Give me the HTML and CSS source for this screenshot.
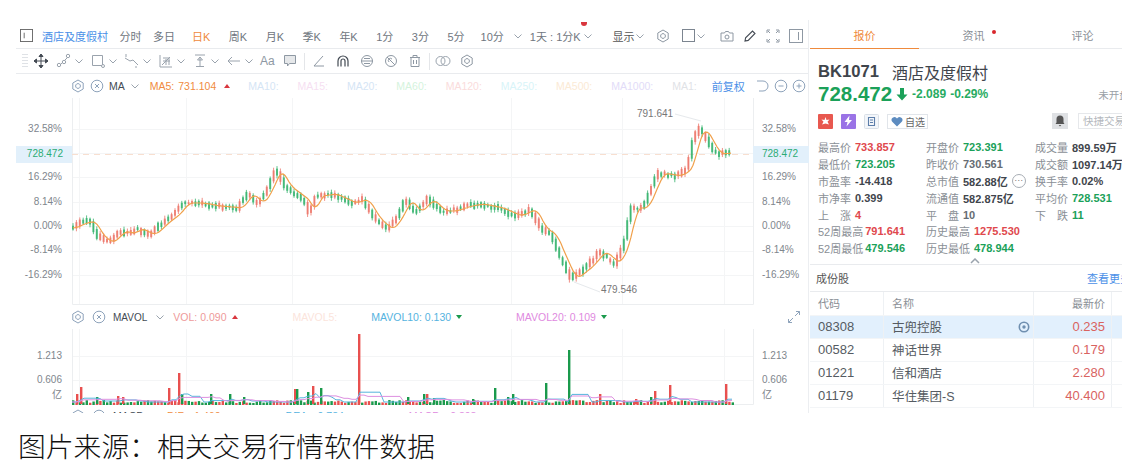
FILE: index.html
```html
<!doctype html>
<html lang="zh-CN">
<head>
    <meta charset="UTF-8">
    <title>BK1071 酒店及度假村</title>
    <link rel="stylesheet" href="styles.css">
</head>
<body>
<svg class="defs" width="0" height="0">
    <symbol id="gear" viewBox="0 0 14 14"><path d="M7 1l5.2 3v6L7 13l-5.2-3V4z M7 4.6a2.4 2.4 0 1 0 .01 0z" fill="none" stroke="currentColor"/></symbol>
    <symbol id="close" viewBox="0 0 14 14"><circle cx="7" cy="7" r="5.8" fill="none" stroke="currentColor"/><path d="M5 5l4 4M9 5l-4 4" stroke="currentColor"/></symbol>
    <symbol id="chev" viewBox="0 0 10 10"><path d="M1.5 3.5L5 7l3.5-3.5" fill="none" stroke="currentColor"/></symbol>
    <symbol id="panel" viewBox="0 0 14 14"><rect x=".5" y=".5" width="13" height="13" fill="none" stroke="currentColor"/><path d="M4.5 4v6" stroke="currentColor" id="panel-bar"/></symbol>
    <symbol id="panelr" viewBox="0 0 14 14"><rect x=".5" y=".5" width="13" height="13" fill="none" stroke="currentColor"/><path d="M9.5 3v8" stroke="currentColor"/></symbol>
</svg>

<div class="shot">
    <div class="left">
        <div class="toolbar">
            <svg class="ico14 side"><use href="#panel"/></svg>
            <span class="tab title">酒店及度假村</span>
            <span class="tab near">分时</span>
            <span class="tab near">多日</span>
            <span class="tab on">日K</span>
            <span class="tab">周K</span>
            <span class="tab">月K</span>
            <span class="tab">季K</span>
            <span class="tab">年K</span>
            <span class="tab">1分</span>
            <span class="tab">3分</span>
            <span class="tab">5分</span>
            <span class="tab near2">10分</span>
            <svg class="chev m-ten"><use href="#chev"/></svg>
            <span class="tab range">1天 : 1分K<i class="dot-top"></i></span>
            <svg class="chev"><use href="#chev"/></svg>
            <span class="tab show">显示</span>
            <svg class="chev"><use href="#chev"/></svg>
            <svg class="ico14 m-gear"><use href="#gear"/></svg>
            <span class="box"></span>
            <svg class="chev"><use href="#chev"/></svg>
            <svg class="ico14 m-cam" viewBox="0 0 14 14"><path d="M1 4h3.5l1-1.5h3l1 1.500H13v8H1z" fill="none" stroke="currentColor"/><circle cx="7" cy="8" r="2" fill="none" stroke="currentColor"/></svg>
            <svg class="ico14 m-tool dark" viewBox="0 0 14 14"><path d="M2 12l.6-3.2L9.5 2 12 4.5 5.2 11.4z" fill="none" stroke="currentColor" stroke-width="1.1"/></svg>
            <svg class="ico14 m-tool" viewBox="0 0 14 14"><path d="M1 4V1h3M10 1h3v3M13 10v3h-3M4 13H1v-3M4 4L2 2M10 4l2-2M4 10l-2 2M10 10l2 2" fill="none" stroke="currentColor"/></svg>
            <svg class="ico14 m-tool"><use href="#panelr"/></svg>
        </div>

        <div class="drawbar">
            <span class="grip"></span>
            <svg class="ico16 dark move" viewBox="0 0 16 16"><path d="M8 1v14M1 8h14M8 1L6 3.5h4zM8 15l-2-2.5h4zM1 8l2.5-2v4zM15 8l-2.5-2v4z" stroke="currentColor" fill="currentColor"/></svg>
            <span class="dgroup first"><svg class="ico16" viewBox="0 0 16 16"><path d="M3 13L13 3" stroke="currentColor"/><circle cx="3" cy="12" r="1.7" fill="#fff" stroke="currentColor"/><circle cx="8" cy="9" r="1.7" fill="#fff" stroke="currentColor"/><circle cx="12" cy="3" r="1.7" fill="#fff" stroke="currentColor"/></svg><svg class="chev"><use href="#chev"/></svg></span>
            <span class="dgroup"><svg class="ico16" viewBox="0 0 16 16"><path d="M2.5 2.5h10v10h-10z" fill="none" stroke="currentColor"/><circle cx="13" cy="13" r="1.5" fill="#fff" stroke="currentColor"/></svg><svg class="chev"><use href="#chev"/></svg></span>
            <span class="dgroup"><svg class="ico16" viewBox="0 0 16 16"><path d="M1 5l5 3 3-1 5 5" fill="none" stroke="currentColor"/><path d="M2 1v3M12 13v2" stroke="currentColor"/></svg><svg class="chev"><use href="#chev"/></svg></span>
            <span class="dgroup"><svg class="ico16" viewBox="0 0 16 16"><path d="M2 2v12h12M4 12l8-8M5 8h7M5 5h7M8 6v6M11 6v6" fill="none" stroke="currentColor"/></svg><svg class="chev"><use href="#chev"/></svg></span>
            <span class="dgroup"><svg class="ico16" viewBox="0 0 16 16"><path d="M3 2h10M4 13.500h8M8 4v9.500M8 4L5.500 7h5z" fill="none" stroke="currentColor"/></svg><svg class="chev"><use href="#chev"/></svg></span>
            <span class="dgroup"><svg class="ico16" viewBox="0 0 16 16"><path d="M14 8H2M6 4L2 8l4 4" fill="none" stroke="currentColor"/></svg><svg class="chev"><use href="#chev"/></svg></span>
            <span class="aa">Aa</span>
            <svg class="ico14 m-cmt" viewBox="0 0 14 14"><path d="M1.500 1.500h11v8h-6l-2 2.500v-2.500h-3z" fill="#e6e8ea" stroke="currentColor"/></svg>
            <span class="vsep"></span>
            <svg class="ico14 m-ang" viewBox="0 0 14 14"><path d="M11 2L2 12h10" fill="none" stroke="currentColor"/></svg>
            <svg class="ico14 m-dr dark" viewBox="0 0 14 14"><path d="M2 12.500V7a5 5 0 0 1 10 0v5.500M5 12.500V7a2 2 0 0 1 4 0v5.500" fill="none" stroke="currentColor" stroke-width="1.200"/></svg>
            <svg class="ico14 m-dr" viewBox="0 0 14 14"><circle cx="7" cy="7" r="5.500" fill="none" stroke="currentColor"/><path d="M1 7h12M4 4.500h6M4 9.500h6" stroke="currentColor"/></svg>
            <svg class="ico14 m-dr" viewBox="0 0 14 14"><circle cx="7" cy="7" r="5.500" fill="none" stroke="currentColor"/><path d="M3 3l8 8M5 8a2 2 0 0 1 3-3" fill="none" stroke="currentColor"/></svg>
            <svg class="ico14 m-dr" viewBox="0 0 14 14"><path d="M2 3.500h10M5 3.500V1.500h4v2M3 3.500v9h8v-9M5.500 6v4M8.500 6v4" fill="none" stroke="currentColor"/></svg>
            <span class="vsep2"></span>
            <svg class="ico16 m-ring" viewBox="0 0 16 16"><circle cx="5.500" cy="8" r="4.500" fill="none" stroke="currentColor"/><circle cx="10.500" cy="8" r="4.500" fill="none" stroke="currentColor"/></svg>
            <svg class="ico14 m-g2"><use href="#gear"/></svg>
        </div>

        <div class="legend">
            <svg class="ico14"><use href="#gear"/></svg>
            <svg class="ico14 m5"><use href="#close"/></svg>
            <span class="lname m5">MA</span>
            <svg class="chev m5"><use href="#chev"/></svg>
            <span class="orange m-ma5">MA5:</span><span class="orange m4">731.104</span><i class="up m8"></i>
            <span class="pale pb m-a">MA10:</span>
            <span class="pale pp m-b">MA15:</span>
            <span class="pale pb m-b">MA20:</span>
            <span class="pale pg m-b">MA60:</span>
            <span class="pale pr m-b">MA120:</span>
            <span class="pale pc m-b">MA250:</span>
            <span class="pale po m-b">MA500:</span>
            <span class="pale pv m-b">MA1000:</span>
            <span class="pale px m-b">MA1:</span>
            <span class="fq">前复权</span>
            <svg class="ico14 m-undo" viewBox="0 0 14 14"><path d="M1 2h6a5 5 0 0 1 0 10H3" fill="none" stroke="currentColor"/></svg>
            <svg class="ico14 m-zoom" viewBox="0 0 14 14"><circle cx="7" cy="7" r="5.800" fill="none" stroke="currentColor"/><path d="M4.500 7h5" stroke="currentColor"/></svg>
            <svg class="ico14 m-zoom" viewBox="0 0 14 14"><circle cx="7" cy="7" r="5.800" fill="none" stroke="currentColor"/><path d="M4.500 7h5M7 4.500v5" stroke="currentColor"/></svg>
        </div>

        <svg class="chart" width="809" height="207" viewBox="0 97 809 207">
            <g class="grid">
                <path d="M72 128.500H753M72 152.500H753M72 176.500H753M72 201.500H753M72 225.500H753M72 250.500H753M72 274.500H753"/>
                <path d="M79.500 97V304M186.500 97V304M292.500 97V304M511.500 97V304M622.500 97V304M724.500 97V304"/>
            </g>
            <path class="frame" d="M72.500 97V303.500H753.500V97"/>
            <rect class="pricebox" x="16" y="145" width="56" height="17"/>
            <rect class="pricebox" x="753" y="145" width="56" height="17"/>
            <path class="priceline" d="M72 153.500H753"/>
            <g id="candles"></g>
            <polyline id="maLine" class="maline" points=""/>
            <path class="hint" d="M675 113L701 120M574 281L600 291"/>
            <text class="note" x="637" y="116">791.641</text>
            <text class="note" x="601" y="292">479.546</text>
            <g class="axis end">
                <text x="62" y="131">32.58%</text>
                <text x="62" y="179">16.29%</text>
                <text x="62" y="204">8.14%</text>
                <text x="62" y="228">0.00%</text>
                <text x="62" y="252">-8.14%</text>
                <text x="62" y="277">-16.29%</text>
                <text class="last" x="63" y="156">728.472</text>
            </g>
            <g class="axis">
                <text x="762" y="131">32.58%</text>
                <text x="762" y="179">16.29%</text>
                <text x="762" y="204">8.14%</text>
                <text x="762" y="228">0.00%</text>
                <text x="762" y="252">-8.14%</text>
                <text x="762" y="277">-16.29%</text>
                <text class="last" x="762" y="156">728.472</text>
            </g>
        </svg>

        <div class="legend low">
            <svg class="ico14"><use href="#gear"/></svg>
            <svg class="ico14 m7"><use href="#close"/></svg>
            <span class="lname m7">MAVOL</span>
            <svg class="chev m10"><use href="#chev"/></svg>
            <span class="salmon m8">VOL:</span><span class="salmon m3">0.090</span><i class="up m5"></i>
            <span class="pale ps m-c">MAVOL5:</span>
            <span class="sky m-d">MAVOL10:</span><span class="sky m3">0.130</span><i class="down m5"></i>
            <span class="pink m-e">MAVOL20:</span><span class="pink m3">0.109</span><i class="down m5"></i>
            <svg class="ico14 m-exp" viewBox="0 0 14 14"><path d="M8 6l4.500-4.500M9 1.500h3.500V5M6 8l-4.500 4.500M1.500 9v3.500H5" fill="none" stroke="currentColor"/></svg>
        </div>

        <svg class="chart" width="809" height="76" viewBox="0 328 809 76">
            <g class="grid">
                <path d="M72 355.500H753M72 379.500H753"/>
                <path d="M79.500 328V404M186.500 328V404M292.500 328V404M511.500 328V404M622.500 328V404M724.500 328V404"/>
            </g>
            <path class="frame" d="M72.500 328V403.500H753.500V328"/>
            <g id="vols"></g>
            <polyline id="volBlue" class="volblue" points=""/>
            <polyline id="volPink" class="volpink" points=""/>
            <g class="axis end">
                <text x="62" y="358">1.213</text>
                <text x="62" y="382">0.606</text>
                <text x="62" y="397">亿</text>
            </g>
            <g class="axis">
                <text x="762" y="358">1.213</text>
                <text x="762" y="382">0.606</text>
                <text x="762" y="397">亿</text>
            </g>
        </svg>

        <div class="legend macd">
            <svg class="ico14"><use href="#gear"/></svg>
            <svg class="ico14 m7"><use href="#close"/></svg>
            <span class="lname m7">MACD</span>
            <span class="orange m-dif">DIF:</span><span class="orange m4">-1.460</span>
            <span class="sky m-dea">DEA:</span><span class="sky m4">-0.784</span>
            <span class="pink m-mac">MACD:</span><span class="pink m4">-0.898</span>
        </div>
    </div>

    <div class="right">
        <div class="tabs">
            <span class="rtab act">报价</span>
            <span class="rtab">资讯<i class="news-dot"></i></span>
            <span class="rtab">评论</span>
        </div>
        <div class="head">
            <div class="code-line"><b>BK1071</b><span>酒店及度假村</span></div>
            <div class="price-line">
                <b class="price">728.472</b>
                <svg class="arrow" viewBox="0 0 12 14"><path d="M4 1h4v6.500h3.500L6 13.500.5 7.500H4z" fill="currentColor"/></svg>
                <b class="chg">-2.089</b>
                <b class="chg">-0.29%</b>
                <span class="closed">未开盘</span>
            </div>
            <div class="tag-line">
                <svg class="tag" viewBox="0 0 15 15"><rect width="15" height="15" rx="1" fill="#e8584f"/><path d="M7.500 3l1 3 3-.5-2 2.300 1.500 2.700-3.500-1-3.500 1 1.500-2.700-2-2.300 3 .5z" fill="#fff"/></svg>
                <svg class="tag t2" viewBox="0 0 15 15"><rect width="15" height="15" rx="1" fill="#9a73e6"/><path d="M8.500 1.500L3.500 8h3l-1 4.500L11 6H8z" fill="#fff"/></svg>
                <svg class="tag t2" viewBox="0 0 15 15"><rect x=".5" y=".5" width="14" height="14" rx="1" fill="#f3f6fa" stroke="#d8dfe7"/><path d="M4.500 3.500h6v8h-6zM6 6h3M6 8.500h3" fill="none" stroke="#5d7eaa" stroke-width="1.100"/></svg>
                <span class="fav"><svg class="heart" viewBox="0 0 12 11"><path d="M6 10.500L1 5.500a2.800 2.800 0 0 1 5-3 2.800 2.800 0 0 1 5 3z" fill="#5d8cc0"/></svg>自选</span>
                <span class="bell"><svg viewBox="0 0 10 12" width="10" height="12"><path d="M5 .5a3.500 3.500 0 0 1 3.500 3.500v3.500l1 1.500H.5l1-1.500V4A3.500 3.500 0 0 1 5 .5zM3.800 10h2.400L5 11.500z" fill="#555"/></svg></span>
                <span class="quick">快捷交易</span>
            </div>
        </div>
        <div class="stats">
            <div class="stat"><label>最高价</label><b class="red">733.857</b></div>
            <div class="stat"><label>开盘价</label><b class="green">723.391</b></div>
            <div class="stat"><label>成交量</label><b>899.59万</b></div>
            <div class="stat"><label>最低价</label><b class="green">723.205</b></div>
            <div class="stat"><label>昨收价</label><b class="gray">730.561</b></div>
            <div class="stat"><label>成交额</label><b>1097.14万</b></div>
            <div class="stat"><label>市盈率</label><b>-14.418</b></div>
            <div class="stat"><label>总市值</label><b>582.88亿</b><i class="more">···</i></div>
            <div class="stat"><label>换手率</label><b>0.02%</b></div>
            <div class="stat"><label>市净率</label><b>0.399</b></div>
            <div class="stat"><label>流通值</label><b>582.875亿</b></div>
            <div class="stat"><label>平均价</label><b class="green">728.531</b></div>
            <div class="stat"><label>上&emsp;涨</label><b class="red">4</b></div>
            <div class="stat"><label>平&emsp;盘</label><b class="gray">10</b></div>
            <div class="stat"><label>下&emsp;跌</label><b class="green">11</b></div>
            <div class="stat tight"><label>52周最高</label><b class="red">791.641</b></div>
            <div class="stat"><label>历史最高</label><b class="red">1275.530</b></div>
            <div class="stat"></div>
            <div class="stat tight"><label>52周最低</label><b class="green">479.546</b></div>
            <div class="stat"><label>历史最低</label><b class="green">478.944</b></div>
        </div>
        <div class="fold"><svg viewBox="0 0 10 6" width="10" height="6"><path d="M1 5l4-4 4 4" fill="none" stroke="#9aa3ad" stroke-width="1.500"/></svg></div>
        <div class="sect"><span>成份股</span><a>查看更多</a></div>
        <div class="row thead">
            <span class="c1">代码</span><span class="c2">名称</span><span class="c3">最新价</span>
        </div>
        <div class="row sel">
            <span class="c1">08308</span><span class="c2">古兜控股<svg class="watch" viewBox="0 0 12 12"><circle cx="6" cy="6" r="4.700" fill="none" stroke="#6f8fb0" stroke-width="1.600"/><circle cx="6" cy="6" r="1.700" fill="#6f8fb0"/></svg></span><span class="c3">0.235</span>
        </div>
        <div class="row"><span class="c1">00582</span><span class="c2">神话世界</span><span class="c3">0.179</span></div>
        <div class="row"><span class="c1">01221</span><span class="c2">信和酒店</span><span class="c3">2.280</span></div>
        <div class="row"><span class="c1">01179</span><span class="c2">华住集团-S</span><span class="c3">40.400</span></div>
    </div>
</div>

<p class="caption">图片来源：相关交易行情软件数据</p>
<script src="chart.js"></script>
</body>
</html>
```

FILE: styles.css
```css
* {
    margin: 0;
    padding: 0;
    box-sizing: border-box;
}
body {
    background: #fff;
    font-family: "Liberation Sans", "Noto Sans CJK SC", sans-serif;
    color: #666;
    font-size: 11px;
    overflow: hidden;
}
i { font-style: normal; }
.defs { position: absolute; }

.shot {
    display: flex;
    height: 413px;
    padding-top: 20px;
    overflow: hidden;
}
.left {
    width: 809px;
    flex: none;
    border-right: 1px solid #eceef1;
}

/* top toolbar */
.toolbar {
    display: flex;
    align-items: center;
    height: 29px;
    margin-left: 16px;
    padding: 3px 0 0 4px;
    border-bottom: 1px solid #e9ebee;
    color: #6f7680;
}
.ico14 { width: 14px; height: 14px; flex: none; color: #8e98a3; }
.ico16 { width: 16px; height: 16px; flex: none; color: #9aa3ad; }
.dark { color: #444b54; }
.chev { width: 10px; height: 10px; flex: none; color: #9aa3ad; }
.side { width: 13px; height: 13px; color: #666; }
.tab { position: relative; margin-left: 18.5px; white-space: nowrap; }
.tab.title { margin-left: 9px; color: #4a8fe7; }
.tab.near { margin-left: 11.5px; }
.tab.on { color: #ef8a3c; margin-left: 17px; }
.tab.near2 { margin-left: 16px; }
.m-ten { margin-left: 9px; }
.tab.range { margin-left: 7px; margin-right: 2px; }
.tab.show { margin-left: 20px; color: #555; }
.dot-top {
    position: absolute;
    top: -6px;
    left: 51px;
    width: 6px;
    height: 4px;
    border-radius: 0 0 3px 3px;
    background: #d9363e;
}
.m-gear { margin-left: 11px; }
.box { width: 13px; height: 13px; margin-left: 12px; margin-right: 1px; border: 1px solid #7c8590; }
.m-cam { margin-left: 14px; }
.m-tool { margin-left: 9px; }

/* drawing bar */
.drawbar {
    display: flex;
    align-items: center;
    height: 25px;
    margin-left: 16px;
    padding-left: 6px;
    border-bottom: 1px solid #e9ebee;
}
.grip {
    width: 6px;
    height: 15px;
    background: repeating-linear-gradient(#dfe2e6 0 1px, #fff 1px 3px);
}
.move { margin-left: 5px; }
.dgroup { display: flex; align-items: center; gap: 2px; width: 34px; flex: none; }
.dgroup.first { margin-left: 7px; }
.aa { width: 17px; font-size: 12px; color: #8e98a3; margin-left: 0; }
.m-cmt { margin-left: 6px; }
.vsep { width: 1px; height: 17px; margin-left: 7px; background: #e4e6e9; }
.m-ang { margin-left: 7px; }
.m-dr { margin-left: 10px; }
.vsep2 { width: 1px; height: 17px; margin-left: 7px; background: #e4e6e9; }
.m-ring { margin-left: 5px; }
.m-g2 { margin-left: 9px; }

/* indicator legends */
.legend {
    display: flex;
    align-items: center;
    height: 24px;
    padding-left: 71px;
    font-size: 10.5px;
    white-space: nowrap;
}
.low { height: 24px; }
.macd { height: 24px; margin-top: -1px; }
.legend .ico14 { color: #8ea3bb; }
.lname { color: #444b54; }
.low .lname { font-size: 10px; }
.m3 { margin-left: 3px; }
.m4 { margin-left: 4px; }
.m5 { margin-left: 5px; }
.m7 { margin-left: 7px; }
.m8 { margin-left: 8px; }
.m10 { margin-left: 8px; }
.m-ma5 { margin-left: 10px; }
.m-a { margin-left: 18px; }
.m-b { margin-left: 19px; }
.m-c { margin-left: 55px; }
.m-d { margin-left: 34px; }
.m-e { margin-left: 54px; }
.m-dif { margin-left: 23px; }
.m-dea { margin-left: 65px; }
.m-mac { margin-left: 65px; }
.m-undo { margin-left: 11px; color: #8e98a3; }
.m-zoom { margin-left: 4px; color: #8e98a3; }
.m-exp { margin-left: 180px; }
.orange { color: #f08b3e; }
.salmon { color: #ee9a9a; }
.sky { color: #55b3e0; }
.pink { color: #e08ae0; }
.pale { font-size: 10.5px; }
.pb { color: #d5e5f5; }
.pp { color: #f6dff2; }
.pg { color: #d5f3dd; }
.pr { color: #fadcdc; }
.pc { color: #d8f4f8; }
.po { color: #fbead5; }
.pv { color: #e2dcf8; }
.px { color: #dfe2e6; }
.ps { color: #fbe4dc; }
.fq { margin-left: 15px; color: #4a8fe7; font-size: 11px; }
.up, .down { width: 0; height: 0; border-left: 3px solid transparent; border-right: 3px solid transparent; }
.up { border-bottom: 4px solid #d9363e; }
.down { border-top: 4px solid #1a9a4c; }

/* charts */
.chart { display: block; font-family: "Liberation Sans", "Noto Sans CJK SC", sans-serif; }
.grid path { stroke: #f4f5f6; fill: none; }
.frame { stroke: #eceef0; fill: none; }
.pricebox { fill: #e2f0fb; }
.priceline { stroke: #f8dfd0; stroke-dasharray: 6 5; fill: none; }
.maline { fill: none; stroke: #f0a04b; stroke-width: 1.2; }
.hint { stroke: #e6e9ec; fill: none; }
.note { font-size: 10px; fill: #777; }
.axis text { font-size: 10px; fill: #80868d; }
.axis.end text { text-anchor: end; }
.axis text.last { fill: #2cab74; }
.volblue { fill: none; stroke: #56b4dc; stroke-width: 1; }
.volpink { fill: none; stroke: #dd90e0; stroke-width: 1; }

/* quote panel */
.right {
    width: 312px;
    flex: none;
    margin-left: 1px;
    overflow: hidden;
}
.tabs {
    display: flex;
    height: 29px;
    border-bottom: 1px solid #e9ebee;
}
.rtab {
    position: relative;
    width: 109px;
    flex: none;
    margin-bottom: -1px;
    text-align: center;
    line-height: 32px;
    color: #8a8f96;
}
.rtab.act { color: #ef8a3c; border-bottom: 1.5px solid #ef8a3c; }
.news-dot {
    position: absolute;
    top: 10px;
    left: 73px;
    width: 4px;
    height: 4px;
    border-radius: 50%;
    background: #d9262c;
}
.head { padding: 13px 0 0 8px; white-space: nowrap; }
.code-line { display: flex; align-items: center; height: 20px; color: #3f454c; }
.code-line b { font-size: 16.6px; }
.code-line span { margin-left: 13px; font-size: 16px; }
.price-line { display: flex; align-items: center; height: 26px; margin-top: -1px; color: #1ba159; }
.price { font-size: 20.5px; }
.arrow { width: 12px; height: 14px; flex: none; margin-left: 4px; }
.chg { font-size: 12px; margin-left: 4px; color: #27ab62; }
.closed { flex: none; margin-left: 110px; color: #9aa0a6; font-size: 10.5px; }
.tag-line { display: flex; align-items: center; height: 20px; margin-top: 4px; }
.tag { width: 15px; height: 15px; flex: none; }
.t2 { margin-left: 8px; }
.fav {
    display: flex;
    flex: none;
    align-items: center;
    gap: 2px;
    width: 41px;
    height: 15px;
    margin-left: 8px;
    padding-left: 3px;
    border: 1px solid #e1e5ea;
    font-size: 10px;
    color: #666;
}
.heart { width: 12px; height: 11px; flex: none; }
.bell {
    display: flex;
    flex: none;
    justify-content: center;
    align-items: center;
    width: 16px;
    height: 16px;
    margin-left: 124px;
    background: #dfe1e4;
}
.quick {
    width: 60px;
    height: 16px;
    flex: none;
    margin-left: 10px;
    padding-left: 4px;
    border: 1px solid #e6e8eb;
    line-height: 14px;
    font-size: 10.5px;
    color: #b4b8bd;
}
.stats {
    display: grid;
    grid-template-columns: 108px 109px 110px;
    grid-auto-rows: 16.8px;
    margin-top: 8px;
    padding-left: 8px;
    white-space: nowrap;
}
.stat { display: flex; align-items: center; gap: 4px; }
.stat.tight { gap: 2px; }
.stat label { color: #8a8f96; }
.stat b { color: #3f454c; }
.stat b.red { color: #e0484d; }
.stat b.green { color: #1ba159; }
.stat b.gray { color: #666c73; }
.more {
    width: 14px;
    height: 14px;
    margin-left: 0;
    border: 1px solid #a7adb4;
    border-radius: 50%;
    text-align: center;
    line-height: 10px;
    font-size: 9px;
    color: #777;
}
.fold { display: flex; justify-content: center; height: 7px; }
.fold svg { margin-left: 17px; margin-top: 1px; }
.sect {
    display: flex;
    justify-content: space-between;
    align-items: center;
    width: 321px;
    height: 28px;
    border-top: 1px solid #e9ebee;
    border-bottom: 1px solid #e9ebee;
    padding: 0 0 0 6px;
    font-size: 11px;
    color: #555;
}
.sect a { color: #4a8fe7; }
.row {
    display: flex;
    align-items: center;
    height: 23px;
    font-size: 13px;
    color: #555b62;
    border-bottom: 1px solid #f3f5f7;
    white-space: nowrap;
}
.row span { display: flex; align-items: center; height: 100%; }
.thead { height: 24px; font-size: 11px; color: #8a8f96; }
.sel { background: #e2f0fd; }
.c1 { width: 74px; padding-left: 8px; border-right: 1px solid #eef1f4; }
.c2 { position: relative; width: 150px; padding-left: 8px; font-size: 12.5px; border-right: 1px solid #eef1f4; }
.thead .c2 { font-size: 11px; }
.c3 { width: 78px; justify-content: flex-end; padding-right: 6px; color: #d9635f; border-right: 1px solid #eef1f4; }
.thead .c3 { color: #8a8f96; }
.watch { position: absolute; top: 5px; left: 134px; width: 12px; height: 12px; }

.caption {
    padding: 17px 0 0 18px;
    font-size: 27.8px;
    line-height: 36px;
    color: #111;
    font-weight: 300;
    white-space: nowrap;
}
```

FILE: chart.js
```js
// 价格走势的关键点，x/y 就是图上的像素位置
const keyPts = [
    [72,227],[83,222],[92,220],[100,235],[110,242],[122,230],[133,233],[137,227],[152,234],
    [167,220],[177,213],[185,202],[200,202],[217,205],[240,207],[250,192],[260,203],[267,193],
    [278,168],[287,185],[307,200],[312,213],[317,195],[333,193],[353,202],[365,198],[377,218],
    [390,229],[400,215],[408,198],[418,212],[430,198],[442,210],[453,210],[468,205],[480,203],
    [500,207],[518,215],[533,208],[543,228],[553,233],[563,257],[573,278],[590,265],[602,250],
    [617,263],[627,240],[633,207],[645,207],[660,172],[678,175],[690,167],[695,140],[702,127],
    [707,135],[717,153],[730,152]
];

let seed = 17;
function rnd() {
    seed = (seed * 16807) % 2147483647;
    return seed / 2147483647;
}

function priceAt(x) {
    for (let i = 1; i < keyPts.length; i++) {
        if (x <= keyPts[i][0]) {
            const a = keyPts[i - 1], b = keyPts[i];
            return a[1] + (b[1] - a[1]) * (x - a[0]) / (b[0] - a[0]);
        }
    }
    return keyPts[keyPts.length - 1][1];
}

const NS = 'http://www.w3.org/2000/svg';
function add(parent, tag, attrs) {
    const el = document.createElementNS(NS, tag);
    Object.keys(attrs).forEach(k => el.setAttribute(k, attrs[k]));
    parent.appendChild(el);
}

// K线
const candles = document.getElementById('candles');
const STEP = 3.4;
for (let x = 73; x <= 732; x += STEP) {
    const now = priceAt(x), next = priceAt(x + STEP);
    let up = next < now;
    if (rnd() < .3) up = !up;
    const body = 1.5 + rnd() * 4.5 + Math.abs(next - now) * .8;
    const top = (now + next) / 2 - body / 2 + (rnd() - .5) * 2.5;
    const color = up ? '#ec7468' : '#33b36c';
    add(candles, 'path', { d: `M${x} ${top - 1 - rnd() * 2}V${top + body + 1 + rnd() * 2}`, stroke: color, 'stroke-width': .8 });
    add(candles, 'rect', { x: x - 1, y: top, width: 2, height: body, fill: color, 'fill-opacity': .8 });
}

// MA5 比价格慢一点
const ma = [];
for (let x = 73; x <= 732; x += 2) {
    let sum = 0;
    for (let k = 0; k < 6; k++) sum += priceAt(Math.max(72, x - k * 1.6));
    ma.push(x + ',' + (sum / 6).toFixed(1));
}
document.getElementById('maLine').setAttribute('points', ma.join(' '));

// 成交量
const BASE = 403;
const vols = document.getElementById('vols');
const spikes = [
    [81,386,'r'],[77,393,'r'],[179,372,'r'],[169,387,'r'],[359,333,'r'],[313,385,'r'],[295,388,'r'],[297,388,'g'],
    [321,387,'g'],[308,391,'g'],[211,393,'g'],[230,393,'g'],[182,393,'g'],[244,396,'g'],[123,396,'r'],[97,396,'g'],[118,395,'r'],
    [569,349,'g'],[546,382,'g'],[495,387,'g'],[726,383,'r'],[670,384,'r'],[655,390,'r'],[600,393,'r'],
    [424,393,'g'],[427,393,'r'],[513,393,'g'],[508,396,'g'],[434,397,'g'],[408,396,'g'],[651,396,'g'],[636,398,'r'],[473,398,'g']
];
for (let x = 73; x <= 733; x += STEP) {
    const up = rnd() > .5;
    add(vols, 'rect', { x: x - 1, y: BASE - 1 - rnd() * 3, width: 2.4, height: 5, fill: up ? '#e8504f' : '#1a9a4c' });
}
spikes.forEach(s => {
    add(vols, 'rect', { x: s[0] - 1, y: s[1], width: 2.4, height: BASE - s[1], fill: s[2] === 'r' ? '#e8504f' : '#1a9a4c' });
});

// 两条均量线，在大量之后抬高
function volLine(id, lag, gain) {
    const pts = [];
    for (let x = 72; x <= 733; x += 4) {
        let h = 2;
        spikes.forEach(s => {
            if (x >= s[0] && x < s[0] + lag) h += (BASE - s[1]) * gain;
        });
        pts.push(x + ',' + (BASE - Math.min(h, 16)).toFixed(1));
    }
    document.getElementById(id).setAttribute('points', pts.join(' '));
}
volLine('volBlue', 22, .14);
volLine('volPink', 44, .08);
```
